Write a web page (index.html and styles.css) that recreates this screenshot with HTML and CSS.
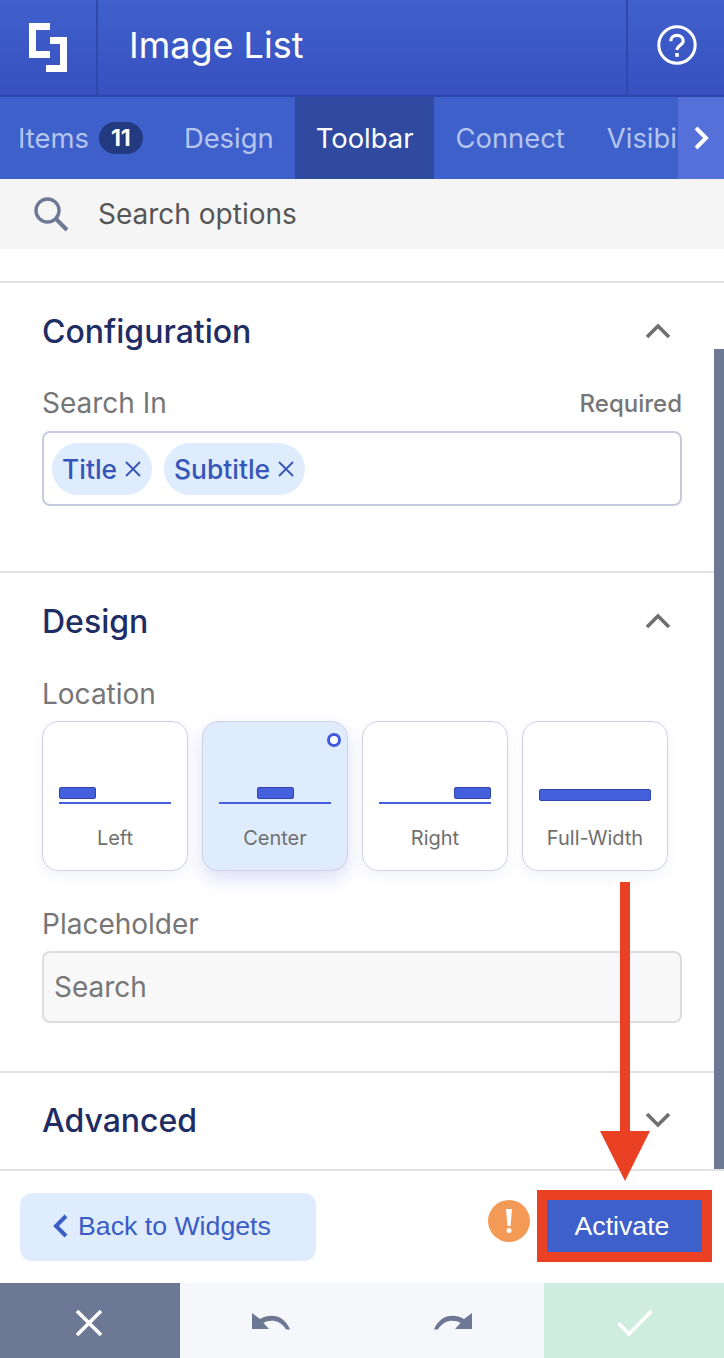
FILE: index.html
```html
<!DOCTYPE html>
<html lang="en">
<head>
    <meta charset="UTF-8">
    <meta name="viewport" content="width=device-width, initial-scale=1.0">
    <title>Image List</title>
    <link rel="stylesheet" href="styles.css">
</head>
<body>
    <div class="app">
        <header class="topbar">
            <div class="logo-cell">
                <svg width="38" height="49" viewBox="29 20 38 49" fill="#fff"><path d="M29 20H50V27H36V48H50V55H29Z"/><path d="M50 34H67V69H46V62H60V41H50Z"/></svg>
            </div>
            <div class="app-title">Image List</div>
            <div class="help-cell">
                <svg width="40" height="40" viewBox="0 0 40 40" fill="none" stroke="#fff" stroke-width="3"><circle cx="20" cy="20" r="18.2"/><path d="M13.8 16.2c0-3.6 2.7-5.8 6.2-5.8s6.2 2.2 6.2 5.4c0 4.6-6.2 4.4-6.2 9.2" stroke-width="3.2"/><rect x="18.2" y="28" width="3.6" height="3.8" fill="#fff" stroke="none"/></svg>
            </div>
        </header>

        <nav class="tabs">
            <a class="tab tab-first">Items <span class="badge">11</span></a>
            <a class="tab">Design</a>
            <a class="tab active">Toolbar</a>
            <a class="tab">Connect</a>
            <a class="tab">Visibility</a>
            <div class="tab-next">
                <svg width="16" height="24" viewBox="0 0 16 24" fill="none" stroke="#fff" stroke-width="4"><path d="M3 2l10 10L3 22"/></svg>
            </div>
        </nav>

        <div class="search-bar">
            <svg width="36" height="36" viewBox="0 0 36 36" fill="none" stroke="#6c7894" stroke-width="3.4"><circle cx="14.5" cy="14.5" r="11.5"/><path d="M23 23l11 11" stroke-width="4"/></svg>
            <span>Search options</span>
        </div>

        <main class="panel">
            <section class="group group-config">
                <div class="group-head">
                    <h2>Configuration</h2>
                    <svg class="chev" width="26" height="16" viewBox="0 0 26 16" fill="none" stroke="#6f6f6f" stroke-width="3.6"><path d="M2 14L13 3l11 11"/></svg>
                </div>
                <div class="label-row">
                    <label>Search In</label>
                    <span class="required">Required</span>
                </div>
                <div class="tag-box">
                    <span class="tag">Title <svg width="16" height="16" viewBox="0 0 16 16" stroke="#3555b8" stroke-width="1.8"><path d="M1 1l14 14M15 1L1 15"/></svg></span>
                    <span class="tag">Subtitle <svg width="16" height="16" viewBox="0 0 16 16" stroke="#3555b8" stroke-width="1.8"><path d="M1 1l14 14M15 1L1 15"/></svg></span>
                </div>
            </section>

            <section class="group group-design">
                <div class="group-head">
                    <h2>Design</h2>
                    <svg class="chev" width="26" height="16" viewBox="0 0 26 16" fill="none" stroke="#6f6f6f" stroke-width="3.6"><path d="M2 14L13 3l11 11"/></svg>
                </div>
                <label>Location</label>
                <div class="cards">
                    <div class="card">
                        <div class="glyph glyph-left"><i class="pill"></i><i class="rule"></i></div>
                        <span>Left</span>
                    </div>
                    <div class="card selected">
                        <b class="dot"></b>
                        <div class="glyph glyph-center"><i class="pill"></i><i class="rule"></i></div>
                        <span>Center</span>
                    </div>
                    <div class="card">
                        <div class="glyph glyph-right"><i class="pill"></i><i class="rule"></i></div>
                        <span>Right</span>
                    </div>
                    <div class="card">
                        <div class="glyph glyph-full"><i class="pill"></i></div>
                        <span>Full-Width</span>
                    </div>
                </div>
                <label class="label-placeholder">Placeholder</label>
                <div class="text-input">Search</div>
            </section>

            <section class="group group-advanced">
                <div class="group-head">
                    <h2>Advanced</h2>
                    <svg class="chev" width="26" height="16" viewBox="0 0 26 16" fill="none" stroke="#6f6f6f" stroke-width="3.6"><path d="M2 2l11 11L24 2"/></svg>
                </div>
            </section>

            <div class="scroll-thumb"></div>
        </main>

        <footer class="actions">
            <a class="back-btn">
                <svg width="16" height="24" viewBox="0 0 16 24" fill="none" stroke="#3a5cc5" stroke-width="4"><path d="M14 2L4 12l10 10"/></svg>
                Back to Widgets
            </a>
            <div class="activate-wrap">
                <span class="warn">
                    <svg width="6" height="24" viewBox="0 0 6 24" fill="#fff"><path d="M0 0h6L4.600 17H1.400Z"/><circle cx="3" cy="21.500" r="2.500"/></svg>
                </span>
                <a class="activate-btn">Activate</a>
            </div>
        </footer>

        <div class="bottom-bar">
            <div class="bb-cell bb-close">
                <svg width="28" height="28" viewBox="0 0 28 28" stroke="#fff" stroke-width="3.6"><path d="M2 2l24 24M26 2L2 26"/></svg>
            </div>
            <div class="bb-cell bb-history">
                <svg width="40" height="18" viewBox="0 0 40 18" fill="#6c7894"><path d="M1 0v16h17l-5.500-6C18 6.500 29 6 35 16.500l4 0C33 2 20 0 9 6Z"/></svg>
            </div>
            <div class="bb-cell bb-history">
                <svg width="40" height="18" viewBox="0 0 40 18" fill="#6c7894"><path d="M39 0v16H22l5.500-6C22 6.500 11 6 5 16.500l-4 0C7 2 20 0 31 6Z"/></svg>
            </div>
            <div class="bb-cell bb-done">
                <svg width="36" height="28" viewBox="0 0 36 28" fill="none" stroke="#fff" stroke-width="3.6"><path d="M1.500 14L12 25 34.500 2"/></svg>
            </div>
        </div>

        <!-- annotation drawn over the screenshot -->
        <svg class="arrow" width="50" height="300" viewBox="0 0 50 300" fill="#ea4125"><path d="M20 0h10v249h20L25 299 0 249h20Z"/></svg>
    </div>
</body>
</html>
```

FILE: styles.css
```css
* {
    margin: 0;
    padding: 0;
    box-sizing: border-box;
}

html, body {
    height: 100%;
    overflow: hidden;
}

body {
    font-family: "Inter", "Liberation Sans", sans-serif;
    background-color: #fff;
}

.app {
    position: relative;
    display: flex;
    flex-direction: column;
    height: 1358px;
    overflow: hidden;
}

.topbar {
    display: flex;
    height: 97px;
    background: linear-gradient(#3f61cb, #3850c0);
    border-bottom: 2px solid #2f46a8;
    color: #fff;
}

.logo-cell {
    width: 98px;
    display: flex;
    align-items: center;
    justify-content: center;
    border-right: 2px solid #3048ac;
}

.app-title {
    flex: 1;
    padding-left: 31px;
    font-size: 36px;
    font-weight: 400;
    line-height: 90px;
}

.help-cell {
    width: 98px;
    display: flex;
    align-items: center;
    justify-content: center;
    border-left: 2px solid #3048ac;
    padding-left: 2px;
    padding-bottom: 5px;
}

.tabs {
    position: relative;
    display: flex;
    height: 82px;
    background-color: #3e60cb;
    overflow: hidden;
    white-space: nowrap;
}

.tab {
    display: flex;
    align-items: center;
    padding: 0 21px;
    font-size: 27.400px;
    color: #b6c5ee;
}

.tab-first {
    padding-left: 18px;
    padding-right: 20px;
}

.tab.active {
    background-color: #2f4a9f;
    color: #fff;
}

.badge {
    margin-left: 10px;
    width: 44px;
    height: 32px;
    border-radius: 16px;
    background-color: #233a80;
    color: #fff;
    font-size: 23px;
    font-weight: 700;
    line-height: 32px;
    text-align: center;
}

.tab-next {
    position: absolute;
    top: 0;
    right: 0;
    width: 46px;
    height: 100%;
    display: flex;
    align-items: center;
    justify-content: center;
    background-color: #5570d9;
}

.search-bar {
    display: flex;
    align-items: center;
    gap: 29px;
    height: 70px;
    padding-left: 33px;
    background-color: #f5f5f5;
    color: #555;
    font-size: 28px;
}

.panel {
    position: relative;
    flex: 1;
    padding-top: 32px;
    overflow: hidden;
}

.group {
    padding: 0 42px;
    border-top: 2px solid #e2e2e2;
}

.group-config {
    height: 290px;
}

.group-design {
    height: 500px;
}

.group-head {
    display: flex;
    align-items: center;
    justify-content: space-between;
    height: 96px;
    padding-right: 11px;
}

.group-advanced .group-head {
    height: 94px;
}

.group-head h2 {
    font-size: 32px;
    font-weight: 500;
    color: #202c64;
}

label {
    display: block;
    font-size: 28px;
    line-height: 32px;
    color: #767676;
}

.label-row {
    display: flex;
    align-items: center;
    justify-content: space-between;
    margin-top: 8px;
}

.required {
    font-size: 24px;
    font-weight: 500;
    color: #767676;
}

.tag-box {
    display: flex;
    align-items: center;
    gap: 12px;
    height: 75px;
    margin-top: 12px;
    padding-left: 8px;
    border: 2px solid #c8cbe0;
    border-radius: 8px;
}

.tag {
    display: flex;
    align-items: center;
    gap: 8px;
    height: 52px;
    padding: 0 11px 0 10px;
    border-radius: 26px;
    background-color: #dfecfd;
    color: #3555b8;
    font-size: 26.400px;
    font-weight: 500;
}

.group-design label {
    margin-top: 9px;
}

.cards {
    display: flex;
    gap: 14px;
    margin-top: 11px;
}

.card {
    position: relative;
    width: 146px;
    height: 150px;
    padding: 65px 16px 0;
    border: 1.5px solid #cfd0e5;
    border-radius: 16px;
    background-color: #fff;
    box-shadow: 0 6px 12px rgba(90, 100, 200, 0.07);
    text-align: center;
    font-size: 20px;
    color: #6f6f6f;
}

.card span {
    display: block;
    margin-top: 21px;
    line-height: 24px;
}

.card.selected {
    background-color: #dfecfd;
    box-shadow: 0 8px 18px rgba(70, 80, 210, 0.18);
}

.dot {
    position: absolute;
    top: 11px;
    right: 6px;
    width: 14px;
    height: 14px;
    border: 3.500px solid #4159dc;
    border-radius: 50%;
    background-color: #fff;
}

.glyph {
    display: flex;
    flex-direction: column;
    height: 18px;
    gap: 3px;
}

.glyph .pill {
    display: block;
    width: 37px;
    height: 12px;
    border: 1.5px solid #2f46a8;
    border-radius: 2px;
    background-color: #4460dc;
}

.glyph .rule {
    display: block;
    width: 112px;
    height: 2px;
    background-color: #4460dc;
}

.glyph-center {
    align-items: center;
}

.glyph-right {
    align-items: flex-end;
}

.glyph-full {
    padding-top: 2px;
}

.glyph-full .pill {
    width: 112px;
}

.group-design .label-placeholder {
    margin-top: 37px;
}

.text-input {
    height: 72px;
    margin-top: 11px;
    padding-left: 10px;
    border: 2px solid #dcdcdc;
    border-radius: 8px;
    background-color: #f8f8f8;
    color: #777;
    font-size: 28px;
    line-height: 68px;
}

.scroll-thumb {
    position: absolute;
    top: 100px;
    right: 0;
    bottom: 0;
    width: 10px;
    background-color: #6c7894;
}

.actions {
    display: flex;
    align-items: center;
    justify-content: space-between;
    height: 114px;
    padding: 0 12px 0 20px;
    border-top: 2px solid #e2e2e2;
    background-color: #fff;
}

.back-btn {
    display: flex;
    align-items: center;
    gap: 10px;
    width: 296px;
    height: 68px;
    padding-left: 32px;
    padding-bottom: 2px;
    border-radius: 12px;
    background-color: #dfecfd;
    color: #3a5cc5;
    font-family: "Liberation Sans", sans-serif;
    font-size: 26.700px;
}

.activate-wrap {
    display: flex;
    align-items: center;
    gap: 7px;
}

.warn {
    display: flex;
    align-items: center;
    justify-content: center;
    width: 42px;
    height: 42px;
    margin-bottom: 12px;
    border-radius: 50%;
    background-color: #f39a57;
}

.activate-btn {
    width: 175px;
    height: 72px;
    margin-bottom: 2px;
    padding-right: 5px;
    border: 10px solid #ea4125;
    background-color: #3e60cb;
    color: #fff;
    font-family: "Liberation Sans", sans-serif;
    font-size: 26.700px;
    line-height: 52px;
    text-align: center;
}

.bottom-bar {
    display: flex;
    height: 75px;
}

.bb-cell {
    display: flex;
    align-items: center;
    justify-content: center;
}

.bb-close {
    width: 180px;
    padding-right: 2px;
    padding-top: 5px;
    background-color: #6c7894;
}

.bb-history {
    width: 182px;
    padding-top: 3px;
    background-color: #f6f7fb;
}

.bb-done {
    width: 180px;
    padding-left: 2px;
    padding-top: 5px;
    background-color: #ceecdf;
}

.arrow {
    position: absolute;
    top: 882px;
    left: 600px;
}
```
